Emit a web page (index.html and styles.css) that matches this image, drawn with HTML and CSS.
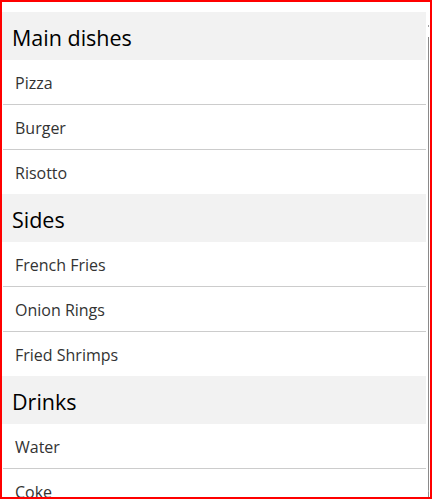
FILE: index.html
```html
<!DOCTYPE html>
<html>
<head>
<meta charset="utf-8">
<link rel="stylesheet" href="styles.css">
</head>
<body>
<div class="frame">
  <div class="list">
    <section class="group">
      <h2 class="group-header">Main dishes</h2>
      <div class="item">Pizza</div>
      <div class="item">Burger</div>
      <div class="item">Risotto</div>
    </section>
    <section class="group">
      <h2 class="group-header">Sides</h2>
      <div class="item">French Fries</div>
      <div class="item">Onion Rings</div>
      <div class="item">Fried Shrimps</div>
    </section>
    <section class="group">
      <h2 class="group-header">Drinks</h2>
      <div class="item">Water</div>
      <div class="item">Coke</div>
      <div class="item">Juice</div>
    </section>
  </div>
  <div class="scrollbar">
    <span class="arrow top"></span>
    <span class="track"></span>
    <span class="arrow bottom"></span>
  </div>
</div>
</body>
</html>
```

FILE: styles.css
```css
html, body {
  margin: 0;
  padding: 0;
  background: #fff;
}
.frame {
  position: relative;
  width: 432px;
  height: 499px;
  box-sizing: border-box;
  border: 2px solid #ff0000;
  overflow: hidden;
  font-family: "Open Sans", "Noto Sans", sans-serif;
}
.list {
  width: 424px;
  padding-top: 10px;
}
.group-header {
  margin: 0;
  height: 48px;
  box-sizing: border-box;
  background: #f2f2f2;
  padding-left: 10px;
  padding-top: 2px;
  font-size: 21.5px;
  font-weight: 400;
  line-height: 48px;
  color: #000;
}
.item {
  height: 43px;
  padding-top: 1px;
  margin-left: 1px;
  padding-left: 12px;
  line-height: 44px;
  font-size: 16px;
  color: #333;
  border-bottom: 1px solid #cccccc;
}
.item:last-child {
  border-bottom: none;
}
.scrollbar {
  position: absolute;
  top: 0;
  right: 0;
  width: 2px;
  height: 100%;
}
.scrollbar .track {
  position: absolute;
  left: 0;
  top: 35px;
  bottom: 0;
  width: 1px;
  background: #8a8a8a;
}
.scrollbar .arrow {
  position: absolute;
  left: 0;
  width: 1px;
  height: 2px;
  background: #a0a0a0;
}
.scrollbar .arrow.top { top: 23px; }
.scrollbar .arrow.bottom { bottom: 5px; }
```
